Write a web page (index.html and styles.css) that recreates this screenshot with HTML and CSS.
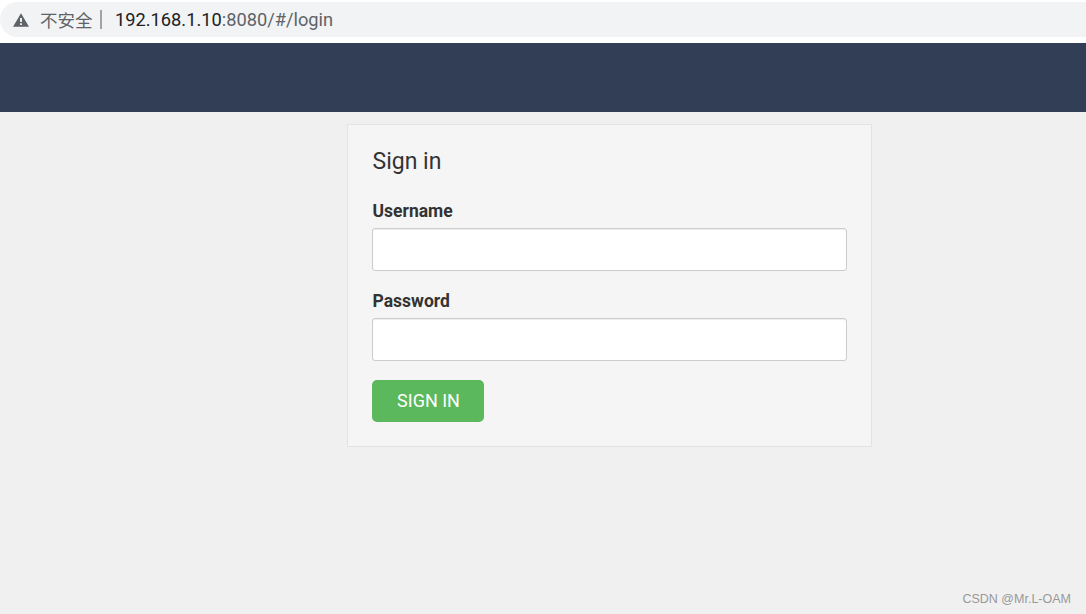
FILE: index.html
```html
<!DOCTYPE html>
<html lang="en">

<head>
    <meta charset="UTF-8">
    <meta name="viewport" content="width=device-width, initial-scale=1.0">
    <title>Sign in</title>

    <link rel="stylesheet" href="styles.css">

</head>
<body>

    <div class="urlbar">
        <div class="urlpill">
            <svg class="warnicon" width="16" height="14" viewBox="0.4 0.5 15.2 13">
                <path fill-rule="evenodd" d="M8 0.5 L15.6 13.5 L0.4 13.5 Z M7.1 5 L7.1 9 L8.9 9 L8.9 5 Z M7.1 10 L7.1 11.8 L8.9 11.8 L8.9 10 Z"/>
            </svg>
            <span class="notsecure">不安全</span>
            <span class="divider"></span>
            <span class="host">192.168.1.10</span><span class="urlrest">:8080/#/login</span>
        </div>
    </div>

    <div class="navbar"></div>

    <div class="content">
        <form class="panel" action="#" name="loginform">
            <h3>Sign in</h3>
            <div class="formgroup">
                <label for="username">Username</label>
                <input type="text" id="username" name="username">
            </div>
            <div class="formgroup">
                <label for="password">Password</label>
                <input type="password" id="password" name="password">
            </div>
            <button type="submit">SIGN IN</button>
        </form>
    </div>

    <div class="watermark">CSDN @Mr.L-OAM</div>

</body>
</html>
```

FILE: styles.css
```css
html, body {
    height: 100%;
}

body {
    margin: 0;
    display: flex;
    flex-direction: column;
    background-color: #f0f0f0;
    font-family: Roboto, 'Liberation Sans', sans-serif;
    color: #333;
    overflow: hidden;
}

.urlbar {
    height: 43px;
    box-sizing: border-box;
    padding-top: 2px;
    background-color: #fff;
}

.urlpill {
    display: flex;
    align-items: center;
    height: 35px;
    padding-left: 13px;
    border-radius: 18px 0 0 18px;
    background-color: #f1f3f4;
    font-size: 18.25px;
}

.warnicon {
    fill: #5f6368;
    margin-right: 11px;
}

.notsecure {
    font-family: 'Noto Sans CJK SC', sans-serif;
    font-size: 17.5px;
    color: #5f6368;
}

.divider {
    width: 2px;
    height: 19px;
    margin: 0 13px 0 7.5px;
    background-color: #a0a4a8;
}

.host {
    color: #202124;
}

.urlrest {
    color: #5f6368;
}

.navbar {
    height: 69px;
    background-color: #323d56;
}

.content {
    display: flex;
    justify-content: center;
    padding-top: 12px;
    padding-left: 133px;
}

.panel {
    width: 525px;
    height: 323px;
    box-sizing: border-box;
    padding: 24px 24px 0 24px;
    background-color: #f5f5f5;
    border: 1px solid #e3e3e3;
}

h3 {
    margin: 0 0 25px 0;
    padding-left: 0.5px;
    font-size: 23px;
    font-weight: 400;
    line-height: 26px;
}

.formgroup {
    margin-bottom: 19px;
}

label {
    display: block;
    margin-bottom: 6px;
    padding-left: 0.5px;
    font-size: 17.5px;
    font-weight: 700;
    line-height: 22px;
}

input {
    display: block;
    width: 100%;
    height: 43px;
    box-sizing: border-box;
    background-color: #fff;
    border: 1px solid #ccc;
    border-radius: 3px;
    box-shadow: inset 0 1px 1px rgba(0, 0, 0, 0.075);
    outline: none;
}

button {
    display: block;
    width: 112px;
    height: 42px;
    padding: 0 0 2px 1px;
    background-color: #5cb85c;
    color: #fff;
    border: none;
    border-radius: 5px;
    font-family: Roboto, 'Liberation Sans', sans-serif;
    font-size: 18px;
    cursor: pointer;
}

.watermark {
    position: absolute;
    right: 15px;
    bottom: 8px;
    font-family: 'Liberation Sans', sans-serif;
    font-size: 12.5px;
    color: #999;
}
```
